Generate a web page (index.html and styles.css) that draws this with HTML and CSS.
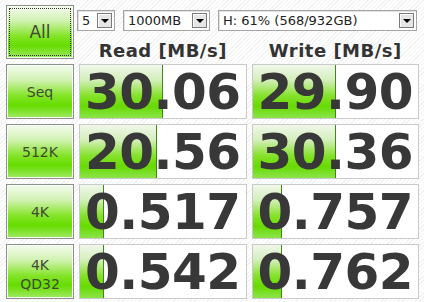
FILE: index.html
```html
<!DOCTYPE html>
<html>
<head>
<meta charset="utf-8">
<link rel="stylesheet" href="styles.css">
</head>
<body>
<div class="app">
  <div class="btn all"><span class="focus">All</span></div>
  <div class="top">
    <div class="selects">
      <div class="sel s-count"><span class="val">5</span><span class="arrow"><i></i></span></div>
      <div class="sel s-size"><span class="val">1000MB</span><span class="arrow"><i></i></span></div>
      <div class="sel s-drive"><span class="val">H: 61% (568/932GB)</span><span class="arrow"><i></i></span></div>
    </div>
    <div class="heads">
      <div class="head">Read [MB/s]</div>
      <div class="head">Write [MB/s]</div>
    </div>
  </div>

  <div class="btn">Seq</div>
  <div class="cell"><div class="bar" style="width:82px"></div><span class="num">30.06</span></div>
  <div class="cell"><div class="bar" style="width:82px"></div><span class="num">29.90</span></div>

  <div class="btn">512K</div>
  <div class="cell"><div class="bar" style="width:76px"></div><span class="num">20.56</span></div>
  <div class="cell"><div class="bar" style="width:82px"></div><span class="num">30.36</span></div>

  <div class="btn">4K</div>
  <div class="cell"><div class="bar" style="width:23px"></div><span class="num">0.517</span></div>
  <div class="cell"><div class="bar" style="width:28px"></div><span class="num">0.757</span></div>

  <div class="btn two">4K<br>QD32</div>
  <div class="cell"><div class="bar" style="width:23px"></div><span class="num">0.542</span></div>
  <div class="cell"><div class="bar" style="width:28px"></div><span class="num">0.762</span></div>
</div>
</body>
</html>
```

FILE: styles.css
```css
html, body {
  margin: 0;
  padding: 0;
}
body {
  width: 424px;
  height: 302px;
  overflow: hidden;
  background: repeating-linear-gradient(135deg, #ffffff 0 2px, #f2f2f2 2px 3px);
  font-family: "DejaVu Sans", sans-serif;
}
.app {
  display: grid;
  grid-template-columns: 68px 1fr 1fr;
  grid-template-rows: 54px 55px 55px 55px 55px;
  column-gap: 5px;
  row-gap: 5px;
  padding: 5px 5px 0 6px;
}
.btn {
  box-sizing: border-box;
  border: 1px solid #8f8f8f;
  box-shadow: inset 0 0 0 1px #f4fff0;
  background: linear-gradient(to bottom, #f4fbee 0%, #d2f2b4 28%, #84e428 58%, #66dc00 76%, #a0ea64 100%);
  color: #3e4a34;
  font-size: 14px;
  display: flex;
  align-items: center;
  justify-content: center;
  text-align: center;
}
.btn.two {
  line-height: 19px;
  padding-top: 6px;
}
.btn.all {
  font-size: 17px;
  padding: 2px;
}
.all .focus {
  box-sizing: border-box;
  width: 100%;
  height: 100%;
  border: 1px dotted #333;
  display: flex;
  align-items: center;
  justify-content: center;
}
.top {
  grid-column: 2 / 4;
  display: flex;
  flex-direction: column;
}
.selects {
  display: flex;
  gap: 8px;
  margin-top: 5px;
  margin-left: -2px;
  height: 21px;
}
.sel {
  box-sizing: border-box;
  height: 21px;
  background: #fff;
  border: 1px solid #a5a5a5;
  box-shadow: inset 1px 1px 0 #e2e2e2;
  display: flex;
  align-items: center;
  justify-content: space-between;
  font-size: 13px;
  color: #222;
  padding: 0 2px 0 4px;
}
.s-count { width: 38px; }
.s-size { width: 87px; }
.s-drive { width: 199px; }
.arrow {
  box-sizing: border-box;
  width: 15px;
  height: 15px;
  background: #e6e6e6;
  border: 1px solid #7a7a7a;
  box-shadow: inset 1px 1px 0 #fff;
  display: flex;
  align-items: center;
  justify-content: center;
}
.arrow i {
  width: 0;
  height: 0;
  border-left: 4px solid transparent;
  border-right: 4px solid transparent;
  border-top: 4px solid #000;
  margin-top: 1px;
}
.heads {
  display: grid;
  grid-template-columns: 1fr 1fr;
  column-gap: 5px;
  margin-top: 9px;
}
.head {
  text-align: center;
  font-weight: bold;
  font-size: 18px;
  color: #333;
  line-height: 22px;
  letter-spacing: 0.5px;
}
.cell {
  box-sizing: border-box;
  position: relative;
  border: 1px solid #cacaca;
  background: #fff;
  display: flex;
  align-items: center;
  justify-content: center;
  overflow: hidden;
}
.bar {
  position: absolute;
  left: 0;
  top: 0;
  bottom: 0;
  background: linear-gradient(to bottom, #f0f7ea 0%, #d4efbc 28%, #86e22c 58%, #68da02 78%, #8ce44a 100%);
  border-right: 1px solid #3d8a10;
}
.num {
  position: relative;
  font-weight: bold;
  font-size: 50px;
  color: #383838;
  line-height: 1;
  letter-spacing: -0.5px;
}
```
